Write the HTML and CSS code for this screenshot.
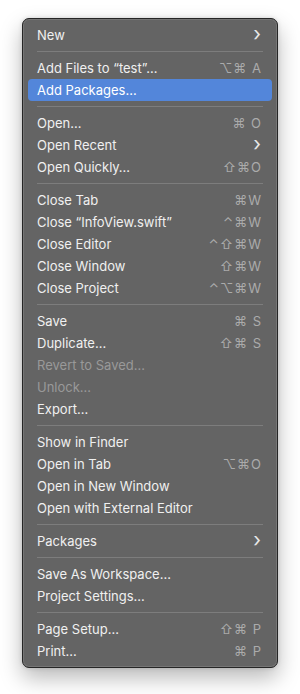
FILE: index.html
```html
<!DOCTYPE html>
<html lang="en">

<head>
    <meta charset="UTF-8">
    <meta name="viewport" content="width=device-width, initial-scale=1.0">
    <title>File Menu</title>
    <link rel="stylesheet" href="styles.css">
</head>

<body>

    <div class="menu">
        <div class="item"><span class="label">New</span><span class="chevron">&#8250;</span></div>
        <div class="sep"></div>
        <div class="item"><span class="label">Add Files to “test”…</span><span class="keys">⌥⌘ A</span></div>
        <div class="item ativo"><span class="label">Add Packages…</span></div>
        <div class="sep"></div>
        <div class="item"><span class="label">Open…</span><span class="keys">⌘ O</span></div>
        <div class="item"><span class="label">Open Recent</span><span class="chevron">&#8250;</span></div>
        <div class="item"><span class="label">Open Quickly…</span><span class="keys">⇧⌘O</span></div>
        <div class="sep"></div>
        <div class="item"><span class="label">Close Tab</span><span class="keys">⌘W</span></div>
        <div class="item"><span class="label">Close “InfoView.swift”</span><span class="keys">⌃⌘W</span></div>
        <div class="item"><span class="label">Close Editor</span><span class="keys">⌃⇧⌘W</span></div>
        <div class="item"><span class="label">Close Window</span><span class="keys">⇧⌘W</span></div>
        <div class="item"><span class="label">Close Project</span><span class="keys">⌃⌥⌘W</span></div>
        <div class="sep"></div>
        <div class="item"><span class="label">Save</span><span class="keys">⌘ S</span></div>
        <div class="item"><span class="label">Duplicate…</span><span class="keys">⇧⌘ S</span></div>
        <div class="item desligado"><span class="label">Revert to Saved…</span></div>
        <div class="item desligado"><span class="label">Unlock…</span></div>
        <div class="item"><span class="label">Export…</span></div>
        <div class="sep"></div>
        <div class="item"><span class="label">Show in Finder</span></div>
        <div class="item"><span class="label">Open in Tab</span><span class="keys">⌥⌘O</span></div>
        <div class="item"><span class="label">Open in New Window</span></div>
        <div class="item"><span class="label">Open with External Editor</span></div>
        <div class="sep"></div>
        <div class="item"><span class="label">Packages</span><span class="chevron">&#8250;</span></div>
        <div class="sep"></div>
        <div class="item"><span class="label">Save As Workspace…</span></div>
        <div class="item"><span class="label">Project Settings…</span></div>
        <div class="sep"></div>
        <div class="item"><span class="label">Page Setup…</span><span class="keys">⇧⌘ P</span></div>
        <div class="item"><span class="label">Print…</span><span class="keys">⌘ P</span></div>
    </div>

</body>

</html>
```

FILE: styles.css
```css
* {
    margin: 0;
    padding: 0;
    box-sizing: border-box;
    font-family: 'Inter', 'Noto Sans', sans-serif;
}

body {
    width: 300px;
    height: 694px;
    background-color: #ffffff;
    padding-top: 18px;
    padding-left: 22px;
}

.menu {
    width: 256px;
    background-color: #646464;
    border: 1px solid #262626;
    border-radius: 7px;
    padding: 5px 5px;
    box-shadow: inset 0 0 0 1px rgba(255, 255, 255, 0.12), 0 10px 22px rgba(0, 0, 0, 0.28), 0 0 4px rgba(0, 0, 0, 0.15);
}

.item {
    height: 22px;
    display: flex;
    align-items: center;
    justify-content: space-between;
    padding: 0 9px 0 9px;
    border-radius: 4px;
    color: #f0f0f0;
    font-size: 13px;
}

.ativo {
    background-color: #5386da;
    color: #ffffff;
}

.desligado {
    color: #999999;
}

.keys {
    color: #ababab;
    font-family: 'Inter', 'DejaVu Sans', sans-serif;
    font-size: 13px;
    letter-spacing: 1px;
    margin-right: 1px;
}

.chevron {
    font-size: 20px;
    line-height: 1;
    color: #e8e8e8;
    margin-top: -3px;
    margin-right: 2px;
}

.sep {
    height: 11px;
    display: flex;
    align-items: center;
    padding: 0 9px;
}

.sep::after {
    content: "";
    display: block;
    width: 100%;
    height: 1px;
    background-color: #7d7d7d;
}
```
